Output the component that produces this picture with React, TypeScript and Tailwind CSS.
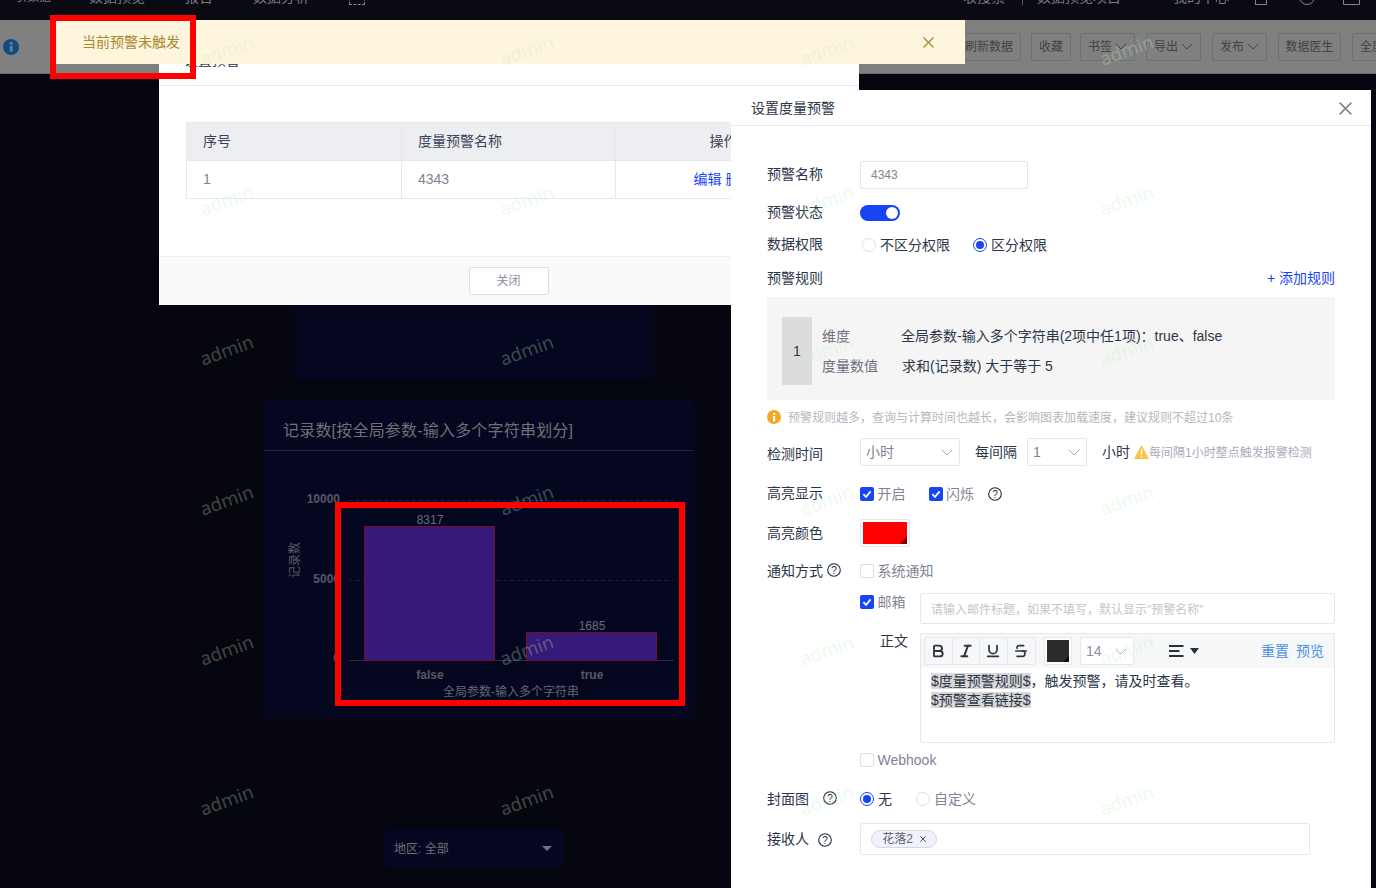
import React from "react";
import { Bold, Italic, Underline, Strikethrough } from "lucide-react";

const FONT = { fontFamily: '"Liberation Sans","Noto Sans CJK SC",sans-serif' };

function Chev({ className = "" }: { className?: string }) {
  return (
    <svg viewBox="0 0 12 7" className={"w-[12px] h-[7px] shrink-0 " + className} fill="none">
      <path d="M.7.7 6 6l5.3-5.3" stroke="currentColor" strokeWidth="1" />
    </svg>
  );
}

function XIcon({ className = "", sw = 1.3 }: { className?: string; sw?: number }) {
  return (
    <svg viewBox="0 0 12 12" className={"shrink-0 " + className} fill="none">
      <path d="M.6.6l10.8 10.8M11.4.6.6 11.4" stroke="currentColor" strokeWidth={sw} />
    </svg>
  );
}

function Help({ className = "" }: { className?: string }) {
  return (
    <svg viewBox="0 0 14 14" className={"w-[14px] h-[14px] shrink-0 " + className} fill="none">
      <circle cx="7" cy="7" r="6.3" stroke="#20283a" strokeWidth="1.1" />
      <text x="7" y="10.6" textAnchor="middle" fontSize="10" fill="#20283a">?</text>
    </svg>
  );
}

function Check({ on, label, className = "" }: { on: boolean; label: string; className?: string }) {
  return (
    <div className={"flex items-center gap-[3.5px] " + className}>
      {on ? (
        <span className="w-[14px] h-[14px] rounded-[2px] bg-[#1745f5] flex items-center justify-center">
          <svg viewBox="0 0 14 14" className="w-[14px] h-[14px]" fill="none">
            <path d="M3.4 7.2 6 10l4.6-5.6" stroke="#fff" strokeWidth="1.8" />
          </svg>
        </span>
      ) : (
        <span className="w-[14px] h-[14px] rounded-[2px] border border-[#dcdfe6] bg-white" />
      )}
      <span className="text-[#7f8494]">{label}</span>
    </div>
  );
}

function Radio({ on, label, labelClass = "text-[#2b3648]" }: { on: boolean; label: string; labelClass?: string }) {
  return (
    <div className="flex items-center gap-[4px]">
      {on ? (
        <span className="w-[14px] h-[14px] rounded-full border border-[#1745f5] flex items-center justify-center">
          <span className="w-[8px] h-[8px] rounded-full bg-[#1745f5]" />
        </span>
      ) : (
        <span className="w-[14px] h-[14px] rounded-full border border-[#dcdfe6]" />
      )}
      <span className={labelClass}>{label}</span>
    </div>
  );
}

function Select({ text, w }: { text: string; w: string }) {
  return (
    <div className={"h-[28px] border border-[#e3e5ec] rounded-[2px] flex items-center justify-between pl-[5px] pr-[6px] text-[#7f8494] " + w}>
      <span>{text}</span>
      <Chev className="text-[#a8adb8]" />
    </div>
  );
}

function ToolBtn({ children, className = "" }: { children: React.ReactNode; className?: string }) {
  return (
    <div className={"h-[28px] shrink-0 whitespace-nowrap border border-[#6f6f6f] rounded-[2px] flex items-center text-[12px] text-[#404249] " + className}>
      {children}
    </div>
  );
}

function Watermarks() {
  const cells = Array.from({ length: 24 });
  return (
    <div className="absolute left-[77px] top-[-25px] grid grid-cols-[repeat(4,300px)] auto-rows-[150px] pointer-events-none">
      {cells.map((_, i) => (
        <div key={i} className="flex items-center justify-center">
          <span className="-rotate-[20deg] text-[18.5px] text-[rgba(190,240,190,0.3)]" style={{ fontFamily: '"Noto Sans",sans-serif' }}>
            admin
          </span>
        </div>
      ))}
    </div>
  );
}

function Chart() {
  const axis = "#565864";
  return (
    <svg viewBox="0 0 430 268" className="w-[430px] h-[268px] block -mt-[1px]" fontFamily='"Liberation Sans","Noto Sans CJK SC",sans-serif'>
      <line x1="85" x2="410" y1="50.5" y2="50.5" stroke="#22233a" strokeDasharray="4 3" />
      <line x1="85" x2="410" y1="130.5" y2="130.5" stroke="#1e1f30" strokeDasharray="4 3" />
      <line x1="85" x2="410" y1="210.5" y2="210.5" stroke="#2c2d3a" />
      <g fontSize="12" fontWeight="700" fill={axis} textAnchor="end">
        <text x="76" y="53">10000</text>
        <text x="76" y="133">5000</text>
        <text x="76" y="212">0</text>
      </g>
      <text transform="translate(35 110) rotate(-90)" textAnchor="middle" fontSize="12" fill={axis}>记录数</text>
      <rect x="100.5" y="76.5" width="130" height="134" fill="#351a7a" stroke="#7a0a2e" />
      <rect x="262.5" y="182.5" width="130" height="28" fill="#351a7a" stroke="#7a0a2e" />
      <g fontSize="12" fill="#6b6d78" textAnchor="middle">
        <text x="166" y="74">8317</text>
        <text x="328" y="180">1685</text>
      </g>
      <g fontSize="12" fontWeight="700" fill={axis} textAnchor="middle">
        <text x="166" y="229">false</text>
        <text x="328" y="229">true</text>
      </g>
      <text x="247" y="246" fontSize="12" fill="#63656f" textAnchor="middle">全局参数-输入多个字符串</text>
    </svg>
  );
}

function Background() {
  const withChev = "justify-between px-[7px] w-[55px]";
  return (
    <div className="w-[1376px] h-[888px] flex flex-col bg-[#05060f]">
      <div className="h-[20px] bg-[#0a0b12] overflow-hidden shrink-0 text-[14px] text-[#7b7c82]">
        <div className="h-[20px] -mt-[13px] flex items-center whitespace-nowrap">
          <span className="ml-[15px] text-[12px]">引数据</span>
          <span className="ml-[38px]">数据预览</span>
          <span className="ml-[40px]">报告</span>
          <span className="ml-[40px]">数据分析</span>
          <span className="ml-[40px] w-[16px] h-[16px] shrink-0 border border-dashed border-[#85868c]" />
          <span className="ml-[598px]">收搜索</span>
          <span className="ml-[17px] w-px h-[16px] shrink-0 bg-[#55565c]" />
          <span className="ml-[14px]">数据预览项目</span>
          <span className="ml-[52px]">我的中心</span>
          <span className="ml-[26px] w-[12px] h-[16px] shrink-0 border border-[#85868c]" />
          <span className="ml-[32px] w-[16px] h-[16px] shrink-0 rounded-full border border-[#85868c]" />
          <span className="ml-[28px] w-[17px] h-[16px] shrink-0 rounded-t-full border border-[#85868c]" />
        </div>
      </div>
      <div className="h-[54px] shrink-0 bg-[#808080] border-b border-[#717171] flex items-center overflow-hidden">
        <svg viewBox="0 0 16 16" className="ml-[3px] w-[16px] h-[16px] shrink-0">
          <circle cx="8" cy="8" r="8" fill="#0f4c81" />
          <rect x="6.8" y="7" width="2.8" height="5.6" fill="#808080" />
          <rect x="6.8" y="3.2" width="2.8" height="2.4" fill="#808080" />
        </svg>
        <ToolBtn className="ml-[938px] w-[64px] justify-center">刷新数据</ToolBtn>
        <ToolBtn className="ml-[10px] w-[40px] justify-center">收藏</ToolBtn>
        <ToolBtn className={"ml-[9px] " + withChev}>书签<Chev /></ToolBtn>
        <ToolBtn className={"ml-[11px] " + withChev}>导出<Chev /></ToolBtn>
        <ToolBtn className={"ml-[11px] " + withChev}>发布<Chev /></ToolBtn>
        <ToolBtn className="ml-[11px] w-[63px] justify-center">数据医生</ToolBtn>
        <ToolBtn className="ml-[11px] w-[50px] pl-[7px]">全屏</ToolBtn>
      </div>
      <div className="flex-1 overflow-hidden">
        <div className="ml-[294px] w-[360px] h-[305px] bg-[#050720] rounded-[3px]" />
        <div className="ml-[264px] mt-[20px] w-[430px] h-[319px] bg-[#050720] rounded-[3px]">
          <div className="h-[52px] border-b border-[#23243a] flex items-center pl-[19px] pt-[13px] text-[16px] tracking-[0.2px] text-[#6f7078]">
            记录数[按全局参数-输入多个字符串划分]
          </div>
          <Chart />
        </div>
        <div className="ml-[384px] mt-[111px] w-[180px] h-[39px] bg-[#050720] rounded-[3px] flex items-center justify-between pl-[10px] pr-[12px] text-[12px] text-[#6f7078]">
          <span>地区: 全部</span>
          <span className="w-0 h-0 border-l-[5px] border-r-[5px] border-t-[5px] border-l-transparent border-r-transparent border-t-[#6f7078]" />
        </div>
      </div>
    </div>
  );
}

function ListDialog() {
  const cell = "border-r border-[#e6e8ee] flex items-center";
  return (
    <div className="absolute left-[159px] top-[35px] w-[700px] h-[270px] bg-white flex flex-col text-[14px]">
      <div className="h-[51px] shrink-0 border-b border-[#e8eaf0] flex items-center pl-[25px] text-[#2b3648]">设置预警</div>
      <div className="flex-1 pt-[36px] pl-[27px] pr-[27px]">
        <div className="border border-[#e6e8ee]">
          <div className="h-[38px] bg-[#eceef1] border-b border-[#e6e8ee] flex text-[#3a4357]">
            <div className={cell + " w-[215px] pl-[16px]"}>序号</div>
            <div className={cell + " w-[214px] pl-[16px]"}>度量预警名称</div>
            <div className="flex-1 flex items-center justify-center">操作</div>
          </div>
          <div className="h-[37px] flex text-[#7f8494]">
            <div className={cell + " w-[215px] pl-[16px]"}>1</div>
            <div className={cell + " w-[214px] pl-[16px]"}>4343</div>
            <div className="flex-1 flex items-center justify-center gap-[4px] text-[#1745f5]">
              <span>编辑</span>
              <span>删除</span>
            </div>
          </div>
        </div>
      </div>
      <div className="h-[49px] shrink-0 bg-[#fafafa] border-t border-[#eceef2] flex items-center justify-center pr-[1px]">
        <div className="w-[80px] h-[28px] bg-white border border-[#dcdfe6] rounded-[2px] flex items-center justify-center text-[12px] text-[#8a8f9c]">关闭</div>
      </div>
    </div>
  );
}

function Label({ children, className = "-mt-[1px]" }: { children: React.ReactNode; className?: string }) {
  return <div className={"shrink-0 w-[93px] text-[#2b3648] " + className}>{children}</div>;
}

function Editor() {
  const tb = "w-[27.5px] h-[26px] flex items-center justify-center border-r border-[#e6e8ee] last:border-r-0 text-[#2f3440]";
  return (
    <div className="w-[415px] h-[110px] border border-[#e6e8ee] rounded-[2px] flex flex-col">
      <div className="h-[34px] bg-[#f6f7f9] flex items-center pl-[3px] shrink-0">
        <div className="flex border border-[#e6e8ee] rounded-[2px] h-[28px]">
          <div className={tb}><Bold className="w-[16px] h-[16px]" strokeWidth={2.8} /></div>
          <div className={tb}><Italic className="w-[16px] h-[16px]" strokeWidth={3} /></div>
          <div className={tb}><Underline className="w-[16px] h-[16px]" strokeWidth={2.6} /></div>
          <div className={tb}><Strikethrough className="w-[16px] h-[16px]" strokeWidth={2.4} /></div>
        </div>
        <div className="ml-[8px] w-[28px] h-[28px] bg-white border border-[#e6e8ee] rounded-[2px] flex items-center justify-center">
          <svg viewBox="0 0 22 22" className="w-[22px] h-[22px]">
            <rect width="22" height="22" fill="#2b2b2b" />
            <path d="M22 16v6h-6z" fill="#111" />
          </svg>
        </div>
        <div className="ml-[8px] w-[54px] h-[28px] bg-white border border-[#e6e8ee] rounded-[2px] flex items-center justify-between pl-[5px] pr-[6px] text-[#8a8f9c]">
          <span>14</span>
          <Chev className="text-[#b4b8c2]" />
        </div>
        <svg viewBox="0 0 30 14" className="ml-[35px] w-[30px] h-[14px] shrink-0">
          <path d="M0 2h14.5M0 7h10.5M0 12h14.5" stroke="#2b2f38" strokeWidth="1.8" />
          <path d="M21 4h9l-4.5 6z" fill="#2b2f38" />
        </svg>
        <span className="ml-[62px] text-[#4a90e2]">重置</span>
        <span className="ml-[7px] text-[#4a90e2]">预览</span>
      </div>
      <div className="pl-[10px] pt-[4px] text-[#2b3648] leading-[19px]">
        <div><span className="bg-[#d8d8d8]">$度量预警规则$</span>，触发预警，请及时查看。</div>
        <div><span className="bg-[#d8d8d8]">$预警查看链接$</span></div>
      </div>
    </div>
  );
}

function AlarmDialog() {
  return (
    <div className="absolute left-[731px] top-[90px] w-[640px] h-[798px] bg-white text-[14px] overflow-hidden">
      <div className="h-[36px] border-b border-[#e8eaf0] flex items-center justify-between pl-[20px] pr-[19px] pt-[1px] text-[#2b3648]">
        <span>设置度量预警</span>
        <XIcon className="w-[13px] h-[13px] text-[#7e828c]" sw={1.4} />
      </div>
      <div className="pl-[36px] pr-[36px] pt-[35px] flex flex-col">
        <div className="flex items-center h-[28px]">
          <Label>预警名称</Label>
          <div className="w-[168px] h-[28px] border border-[#e3e5ec] rounded-[2px] flex items-center pl-[10px] text-[12px] text-[#7f8494]">4343</div>
        </div>
        <div className="flex items-center h-[16px] mt-[16px]">
          <Label>预警状态</Label>
          <div className="w-[40px] h-[16px] rounded-full bg-[#1745f5] flex items-center justify-end pr-[2px]">
            <span className="w-[12px] h-[12px] rounded-full bg-white" />
          </div>
        </div>
        <div className="flex items-center h-[20px] mt-[14px]">
          <Label>数据权限</Label>
          <div className="ml-[2px]"><Radio on={false} label="不区分权限" /></div>
          <div className="ml-[23px]"><Radio on label="区分权限" /></div>
        </div>
        <div className="flex items-center justify-between h-[20px] mt-[13px]">
          <Label className="">预警规则</Label>
          <span className="text-[#1745f5]">+ 添加规则</span>
        </div>
        <div className="h-[103px] mt-[9px] bg-[#f5f5f5] pl-[15px] pt-[20px] flex items-start">
          <div className="w-[30px] h-[68px] bg-[#dcdcdc] flex items-center justify-center text-[#2b3648]">1</div>
          <div className="ml-[10px] mt-[9px] flex flex-col text-[#2b3648]">
            <div className="flex h-[20px] items-center">
              <span className="w-[79px] text-[#6b7080]">维度</span>
              <span>全局参数-输入多个字符串(2项中任1项)：true、false</span>
            </div>
            <div className="flex h-[20px] items-center mt-[10px]">
              <span className="w-[80px] text-[#6b7080]">度量数值</span>
              <span>求和(记录数) 大于等于 5</span>
            </div>
          </div>
        </div>
        <div className="flex items-center h-[18px] mt-[8px] text-[12px] text-[#b4b7c0]">
          <svg viewBox="0 0 14 14" className="w-[14px] h-[14px] shrink-0">
            <circle cx="7" cy="7" r="7" fill="#f5a623" />
            <rect x="6" y="2.8" width="2.2" height="2.2" fill="#fff" />
            <rect x="6" y="6" width="2.2" height="5.4" fill="#fff" />
          </svg>
          <span className="ml-[7px] pt-[2px]">预警规则越多，查询与计算时间也越长，会影响图表加载速度，建议规则不超过10条</span>
        </div>
        <div className="flex items-center h-[28px] mt-[12px]">
          <Label className="pt-[4px]">检测时间</Label>
          <Select text="小时" w="w-[100px]" />
          <span className="ml-[15px] text-[#2b3648]">每间隔</span>
          <div className="ml-[10px]"><Select text="1" w="w-[60px]" /></div>
          <span className="ml-[15px] text-[#2b3648]">小时</span>
          <svg viewBox="0 0 14 13" className="ml-[4px] w-[15px] h-[14px] shrink-0">
            <path d="M7 0 14 13H0z" fill="#fbc34a" />
            <rect x="6.4" y="4" width="1.3" height="5" fill="#fff" />
            <rect x="6.4" y="10" width="1.3" height="1.4" fill="#fff" />
          </svg>
          <span className="text-[12px] text-[#a8acb8] pt-[2px]">每间隔1小时整点触发报警检测</span>
        </div>
        <div className="flex items-center h-[20px] mt-[18px]">
          <Label>高亮显示</Label>
          <Check on label="开启" />
          <Check on label="闪烁" className="ml-[23px]" />
          <Help className="ml-[14px]" />
        </div>
        <div className="flex items-center h-[28px] mt-[15px]">
          <Label className="">高亮颜色</Label>
          <div className="w-[50px] h-[28px] border border-[#e3e5ec] rounded-[2px] flex items-center justify-center">
            <svg viewBox="0 0 44 22" className="w-[44px] h-[22px]">
              <rect width="44" height="22" fill="#ff0000" />
              <path d="M44 15v7h-7z" fill="#8a0000" />
            </svg>
          </div>
        </div>
        <div className="flex items-center h-[20px] mt-[14px]">
          <div className="w-[93px] shrink-0 flex items-center gap-[4px] text-[#2b3648]">通知方式<Help className="-mt-[2px]" /></div>
          <Check on={false} label="系统通知" />
        </div>
        <div className="flex items-start mt-[12px] h-[31px]">
          <div className="w-[93px] shrink-0" />
          <Check on label="邮箱" className="mt-[-1px] h-[20px] w-[46px]" />
          <div className="ml-[14px] w-[415px] h-[31px] border border-[#e6e8ee] rounded-[2px] flex items-center pl-[10px] pt-[2px] text-[12px] text-[#c4c6cf]">
            请输入邮件标题，如果不填写，默认显示"预警名称"
          </div>
        </div>
        <div className="flex items-start mt-[9px]">
          <div className="w-[153px] shrink-0 pr-[12px] text-right text-[#2b3648] -mt-[2px]">正文</div>
          <Editor />
        </div>
        <div className="flex items-center h-[20px] mt-[7px]">
          <div className="w-[93px] shrink-0" />
          <Check on={false} label="Webhook" />
        </div>
        <div className="flex items-center h-[20px] mt-[19px]">
          <div className="w-[93px] shrink-0 flex items-center gap-[14px] text-[#2b3648]">封面图<Help className="-mt-[2px]" /></div>
          <Radio on label="无" />
          <div className="ml-[24px]"><Radio on={false} label="自定义" labelClass="text-[#7f8494]" /></div>
        </div>
        <div className="flex items-center h-[32px] mt-[14px]">
          <div className="w-[93px] shrink-0 flex items-center gap-[9px] text-[#2b3648] pt-[1px]">接收人<Help /></div>
          <div className="w-[450px] h-[32px] border border-[#e6e8ee] rounded-[2px] flex items-center pl-[10px]">
            <div className="w-[66px] h-[18px] rounded-full bg-[#f1f3f8] border border-[#d4d8e4] flex items-center justify-center gap-[7px] text-[12px] text-[#5d6270]">
              <span>花落2</span>
              <XIcon className="w-[6px] h-[6px] text-[#3a4252]" sw={1.8} />
            </div>
          </div>
        </div>
      </div>
    </div>
  );
}

function Alert() {
  return (
    <div className="absolute left-[56px] top-[20px] w-[909px] h-[44px] bg-[#fdf5dc] flex items-center justify-between pl-[26px] pr-[31px] text-[14px] text-[#a9882e]">
      <span>当前预警未触发</span>
      <XIcon className="w-[11px] h-[11px]" sw={1.4} />
    </div>
  );
}

export default function App() {
  return (
    <div className="relative w-[1376px] h-[888px] overflow-hidden" style={FONT}>
      <Background />
      <ListDialog />
      <AlarmDialog />
      <Alert />
      <Watermarks />
      <div className="absolute left-[50px] top-[15px] w-[146px] h-[64px] border-[6px] border-[#ff0000]" />
      <div className="absolute left-[335px] top-[502px] w-[350px] h-[204px] border-[6px] border-[#ff0000]" />
    </div>
  );
}
